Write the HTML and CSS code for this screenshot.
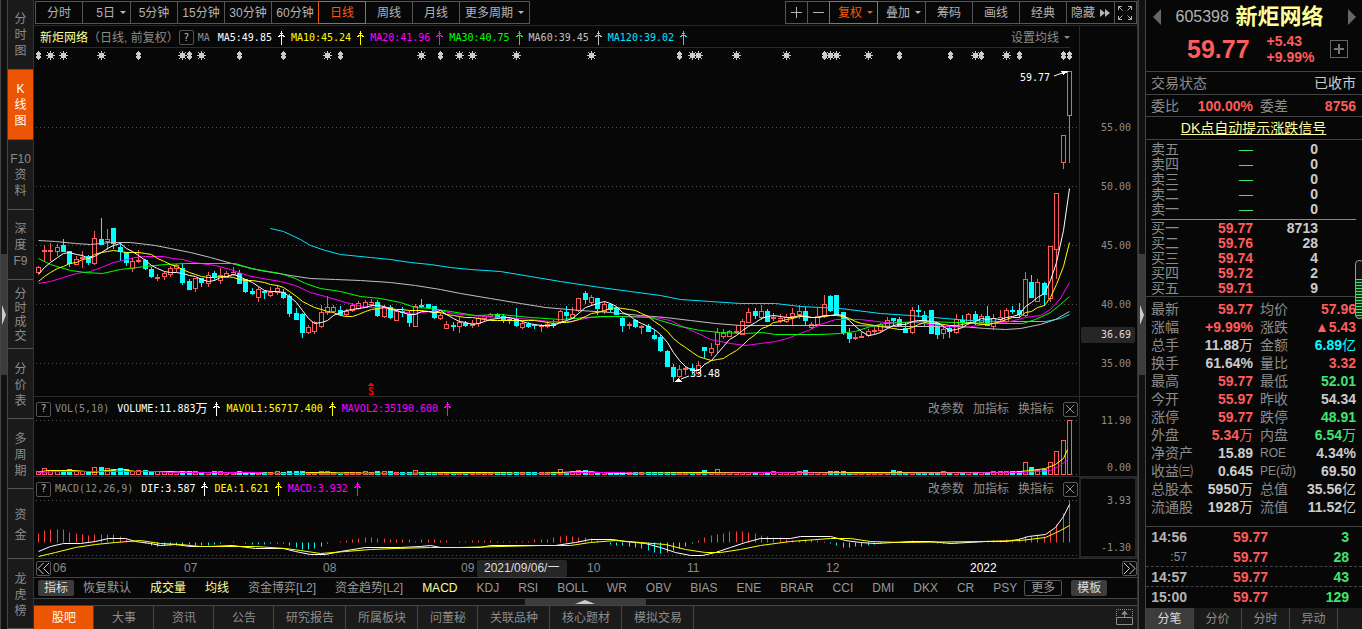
FILE: index.html
```html
<!DOCTYPE html>
<html lang="zh-CN">
<head>
  <meta charset="UTF-8">
  <meta name="viewport" content="width=device-width, initial-scale=1.0">
  <title>新炬网络 605398</title>
  <link rel="stylesheet" href="styles.css">
</head>
<body>
  <svg width="0" height="0" class="defs">
    <symbol id="up" viewBox="0 0 9 14"><path d="M4.500 0v14M3 2.500h3M2 4.500h5M1 5.500h2M6 5.500h2" fill="none" stroke="currentColor" shape-rendering="crispEdges"/></symbol>
    <symbol id="close" viewBox="0 0 14 14"><path d="M3 3l8 8M11 3l-8 8" fill="none" stroke="currentColor"/></symbol>
  </svg>

  <div class="app">
    <div class="gutter"><button class="handle" aria-label="收起左栏"><svg width="5" height="20" viewBox="0 0 5 20"><path d="M1 0l4 10-4 10z" fill="#ccc"/></svg></button></div>

    <nav class="side">
      <button>分<br>时<br>图</button>
      <button class="on">K<br>线<br>图</button>
      <button>F10<br>资<br>料</button>
      <button>深<br>度<br>F9</button>
      <button class="tight">分<br>时<br>成<br>交</button>
      <button>分<br>价<br>表</button>
      <button>多<br>周<br>期</button>
      <button class="loose">资<br>金</button>
      <button>龙<br>虎<br>榜</button>
    </nav>

    <main class="main">
      <div class="toolbar">
        <div class="group">
          <button>分时</button>
          <button class="menu">5日<i class="caret"></i></button>
          <button>5分钟</button>
          <button>15分钟</button>
          <button>30分钟</button>
          <button>60分钟</button>
          <button class="on">日线</button>
          <button>周线</button>
          <button>月线</button>
          <button class="wide">更多周期<i class="caret"></i></button>
        </div>
        <div class="group">
          <button class="icon" aria-label="放大"><svg width="13" height="13"><path d="M1 6.500h11M6.500 1v11" stroke="currentColor"/></svg></button>
          <button class="icon" aria-label="缩小"><svg width="13" height="13"><path d="M1 6.500h11" stroke="currentColor"/></svg></button>
          <button class="menu on">复权<i class="caret"></i></button>
          <button class="menu">叠加<i class="caret"></i></button>
          <button>筹码</button>
          <button>画线</button>
          <button>经典</button>
          <button class="menu">隐藏<svg width="10" height="8"><path d="M0 0l5 4-5 4zM5 0l5 4-5 4z" fill="currentColor"/></svg></button>
          <button class="icon" aria-label="全屏"><svg width="14" height="14"><path d="M.5 4V.5H4M.5.5l4 4M10 .5h3.500V4M13.500.5l-4 4M.5 10v3.500H4M.5 13.500l4-4M10 13.500h3.500V10M13.500 13.500l-4-4" fill="none" stroke="currentColor"/></svg></button>
        </div>
      </div>

      <!-- K线 -->
      <section class="panel price">
        <div class="plot">
          <div class="legend">
            <span class="name">新炬网络</span>
            <span class="sub">（日线, 前复权）</span>
            <button class="box">?</button>
            <span class="tag">MA</span>
            <span class="white">MA5:49.85<svg><use href="#up"/></svg></span>
            <span class="yellow">MA10:45.24<svg><use href="#up"/></svg></span>
            <span class="pink">MA20:41.96<svg><use href="#up"/></svg></span>
            <span class="green">MA30:40.75<svg><use href="#up"/></svg></span>
            <span class="silver">MA60:39.45<svg><use href="#up"/></svg></span>
            <span class="cyan">MA120:39.02<svg><use href="#up"/></svg></span>
            <button class="link right">设置均线<i class="caret"></i></button>
          </div>
          <svg class="chart" id="priceChart" viewBox="34 48 1045 348" preserveAspectRatio="none"></svg>
        </div>
        <div class="axis">
          <span>55.00</span><span>50.00</span><span>45.00</span><span>40.00</span><span>35.00</span>
          <b>36.69</b>
        </div>
      </section>

      <!-- 成交量 -->
      <section class="panel volume">
        <div class="plot">
          <div class="legend">
            <button class="box">?</button>
            <span class="tag">VOL(5,10)</span>
            <span class="white">VOLUME:11.883<em>万</em><svg><use href="#up"/></svg></span>
            <span class="yellow">MAVOL1:56717.400<svg><use href="#up"/></svg></span>
            <span class="pink">MAVOL2:35190.600<svg><use href="#up"/></svg></span>
            <span class="links"><button class="link">改参数</button><button class="link">加指标</button><button class="link">换指标</button><button class="box" aria-label="关闭"><svg width="14" height="14"><use href="#close"/></svg></button></span>
          </div>
          <svg class="chart" id="volChart" viewBox="34 419 1045 57" preserveAspectRatio="none"></svg>
        </div>
        <div class="axis ends"><span>11.90</span><span>0.00</span></div>
      </section>

      <!-- MACD -->
      <section class="panel macd">
        <div class="plot">
          <div class="legend">
            <button class="box">?</button>
            <span class="tag">MACD(12,26,9)</span>
            <span class="white">DIF:3.587<svg><use href="#up"/></svg></span>
            <span class="yellow">DEA:1.621<svg><use href="#up"/></svg></span>
            <span class="pink">MACD:3.932<svg><use href="#up"/></svg></span>
            <span class="links"><button class="link">改参数</button><button class="link">加指标</button><button class="link">换指标</button><button class="box" aria-label="关闭"><svg width="14" height="14"><use href="#close"/></svg></button></span>
          </div>
          <svg class="chart" id="macdChart" viewBox="34 499 1045 59" preserveAspectRatio="none"></svg>
        </div>
        <div class="axis ends framed"><span>3.93</span><span>-1.30</span></div>
      </section>

      <div class="dates">
        <button class="box" aria-label="向前"><svg width="13" height="13"><path d="M6.500 1L1 6.500 6.500 12M12 1L6.500 6.500 12 12" fill="none" stroke="#ccc"/></svg></button>
        <div class="months">
          <span>06</span><span>07</span><span>08</span><span>09</span><span>10</span><span>11</span><span>12</span><span class="year">2022</span>
          <b>2021/09/06/一</b>
        </div>
        <button class="box" aria-label="向后"><svg width="13" height="13"><path d="M1 1l5.500 5.500L1 12M6.500 1L12 6.500 6.500 12" fill="none" stroke="#ccc"/></svg></button>
      </div>

      <div class="indicators">
        <button class="fill">指标</button>
        <button>恢复默认</button>
        <button class="on">成交量</button>
        <button class="on">均线</button>
        <button>资金博弈[L2]</button>
        <button>资金趋势[L2]</button>
        <button class="on">MACD</button>
        <button>KDJ</button>
        <button>RSI</button>
        <button>BOLL</button>
        <button>WR</button>
        <button>OBV</button>
        <button>BIAS</button>
        <button>ENE</button>
        <button>BRAR</button>
        <button>CCI</button>
        <button>DMI</button>
        <button>DKX</button>
        <button>CR</button>
        <button>PSY</button>
        <button class="outline">更多</button>
        <button class="fill">模板</button>
      </div>

      <div class="strip"><button aria-label="展开"><svg width="20" height="4"><path d="M0 4l10-4 10 4z" fill="#ccc"/></svg></button></div>

      <div class="tabs">
        <button class="on">股吧</button>
        <button>大事</button>
        <button>资讯</button>
        <button>公告</button>
        <button>研究报告</button>
        <button>所属板块</button>
        <button>问董秘</button>
        <button>关联品种</button>
        <button>核心题材</button>
        <button>模拟交易</button>
        <button class="popup" aria-label="弹出"><svg width="17" height="17"><path d="M.5 8.500h16v7H.5z" fill="none" stroke="#8c8c8c"/><path d="M.5 7V.5h16V7" fill="none" stroke="#8c8c8c" stroke-dasharray="1 1"/><path d="M8.500 8V3" stroke="#8c8c8c"/><path d="M5 5.500l3.500-4 3.500 4z" fill="#8c8c8c"/></svg></button>
      </div>
    </main>

    <div class="gutter second"><button class="handle" aria-label="收起右栏"><svg width="5" height="20" viewBox="0 0 5 20"><path d="M1 0l4 10-4 10z" fill="#ccc"/></svg></button></div>

    <aside class="quote">
      <header>
        <div class="title">
          <button aria-label="上一个"><svg width="8" height="16"><path d="M8 0v16L0 8z" fill="#666"/></svg></button>
          <span class="code">605398</span>
          <h1>新炬网络</h1>
          <button aria-label="下一个"><svg width="8" height="16"><path d="M0 0v16l8-8z" fill="#666"/></svg></button>
        </div>
        <div class="now">
          <strong>59.77</strong>
          <span>+5.43<br>+9.99%</span>
          <button class="add" aria-label="加自选"><svg width="10" height="10"><path d="M0 5h10M5 0v10" stroke="#777" stroke-width="2"/></svg></button>
        </div>
      </header>
      <div class="line state"><span>交易状态</span><span class="val">已收市</span></div>
      <div class="line ratio"><span>委比</span><b class="red">100.00%</b><span>委差</span><b class="red">8756</b></div>
      <div class="line dk"><a href="#">DK点自动提示涨跌信号</a></div>

      <table class="book">
        <tbody id="asks"></tbody>
        <tbody id="bids"></tbody>
      </table>

      <dl class="stats" id="stats"></dl>

      <table class="ticks">
        <tr><th>14:56</th><td class="red">59.77</td><td class="lime">3</td></tr>
        <tr><th class="sec">:57</th><td class="red">59.77</td><td class="lime">28</td></tr>
        <tr><th>14:57</th><td class="red">59.77</td><td class="lime">43</td></tr>
        <tr><th>15:00</th><td class="red">59.77</td><td class="lime">129</td></tr>
      </table>
      <div class="quote-tabs">
        <button class="on">分笔</button><button>分价</button><button>分时</button><button>异动</button>
      </div>
      <i class="meter"></i>
    </aside>
  </div>

  <script src="chart.js"></script>
</body>
</html>
```

FILE: styles.css
```css
* {
  margin: 0;
  padding: 0;
  box-sizing: border-box;
}

body {
  background: #070707;
  color: #8c8c8c;
  font: 12px/16px "Liberation Sans", "Noto Sans CJK SC", sans-serif;
}

button {
  background: none;
  border: 0;
  color: inherit;
  font: inherit;
  white-space: nowrap;
  cursor: pointer;
}

svg {
  display: block;
  flex: none;
}

em, i {
  font-style: normal;
}

.defs {
  position: absolute;
}

.app {
  display: flex;
  height: 100vh;
  overflow: hidden;
}

/* gutters */
.gutter {
  flex: 0 0 8px;
  display: flex;
  flex-direction: column;
  padding: 254px 0;
  background: #111;
  border-left: 1px solid #444;
  border-right: 1px solid #444;
}

.gutter .handle {
  flex: 1;
  display: flex;
  align-items: center;
  background: #3c3c3c;
}

/* left navigation */
.side {
  flex: 0 0 26px;
  display: flex;
  flex-direction: column;
  background: #1a1a1a;
  border-right: 1px solid #333;
}

.side button {
  flex: 1 1 0;
  min-height: 0;
  border-bottom: 1px solid #555;
  padding-top: 2px;
}

.side .on {
  background: #eb5503;
  color: #fff;
}

.side .tight {
  line-height: 14px;
}

.side .loose {
  line-height: 20px;
}

.main {
  flex: 1;
  min-width: 0;
  display: flex;
  flex-direction: column;
  border-right: 1px solid #333;
}

/* top toolbar */
.toolbar {
  display: flex;
  justify-content: space-between;
  height: 26px;
  padding: 1px 0 1px 1px;
  border-bottom: 1px solid #262626;
}

.group {
  display: flex;
  height: 23px;
  padding-left: 1px;
}

.group button {
  width: 48px;
  margin-left: -1px;
  border: 1px solid #555;
  color: #b4b4b4;
  display: flex;
  align-items: center;
  justify-content: center;
}

.group .menu {
  width: 49px;
  gap: 5px;
  justify-content: flex-end;
  padding-right: 4px;
}

.group .wide {
  width: 71px;
  gap: 5px;
}

.group .icon {
  width: 23px;
}

.group .on {
  position: relative;
  color: #ff5a00;
  border-color: #eb5503;
}

.caret {
  border: 3px solid transparent;
  border-top-color: currentColor;
  border-bottom: 0;
}

/* chart panels */
.panel {
  display: flex;
  border-bottom: 1px solid #2a2a2a;
}

.price {
  flex: 1;
  min-height: 0;
}

.volume {
  height: 80px;
}

.macd {
  height: 82px;
}

.plot {
  flex: 1;
  min-width: 0;
  display: flex;
  flex-direction: column;
}

.legend {
  display: flex;
  align-items: center;
  height: 22px;
  padding: 2px 0 0 2px;
  font-family: "DejaVu Sans Mono", monospace;
  font-size: 10px;
}

.price .legend {
  margin: 0 9px 0 6px;
  padding: 2px 0 0;
  border-bottom: 1px solid #2a2a2a;
}

.legend > span {
  display: flex;
  align-items: center;
  margin-right: 5px;
  white-space: nowrap;
}

.legend > span > svg {
  width: 9px;
  height: 14px;
  margin-left: 5px;
}

.legend em, .legend .name, .legend .sub, .link {
  font: 12px/16px "Liberation Sans", "Noto Sans CJK SC", sans-serif;
}

.legend .name {
  color: #ffff99;
}

.legend .name, .legend .sub {
  margin-right: 0;
}

.legend .box {
  margin-right: 4px;
}

.legend .tag {
  margin-right: 8px;
}

.box {
  flex: none;
  display: flex;
  align-items: center;
  justify-content: center;
  width: 15px;
  height: 15px;
  border: 1px solid #555;
  border-radius: 2px;
  color: #bbb;
}

.link {
  display: flex;
  align-items: center;
  gap: 5px;
}

.legend .right {
  margin-left: auto;
}

.legend .links {
  display: flex;
  gap: 9px;
  margin: 0 1px 0 auto;
}

.links .box {
  margin-right: 0;
  color: #8c8c8c;
}

.chart {
  width: 100%;
  flex: 1 1 0;
  min-height: 0;
  shape-rendering: crispEdges;
}

.chart text {
  font: 10px "DejaVu Sans Mono", monospace;
  fill: #fff;
}

.chart .sell {
  font-weight: bold;
  fill: #f00;
}

.chart path, .chart polyline {
  fill: none;
}

.grid {
  stroke: #555;
  stroke-dasharray: 1 3;
}

.axis {
  position: relative;
  flex: 0 0 58px;
  display: flex;
  flex-direction: column;
  padding: 72px 6px 3px 0;
  border-left: 1px solid #2a2a2a;
  font: 10px/16px "DejaVu Sans Mono", monospace;
  text-align: right;
}

.axis span {
  flex: 1;
  display: flex;
  align-items: center;
  justify-content: flex-end;
}

.axis b {
  position: absolute;
  left: 1px;
  right: 2px;
  top: 301px;
  padding-right: 4px;
  background: #262626;
  border-radius: 2px;
  color: #ddd;
  font-weight: normal;
}

.axis.ends {
  justify-content: space-between;
  padding: 16px 6px 0 0;
}

.axis.ends span {
  flex: none;
}

.axis.framed {
  border: 2px solid #262626;
  padding: 14px 4px 0 0;
}

/* date axis */
.dates {
  display: flex;
  align-items: center;
  height: 19px;
  padding: 0 0 0 2px;
  border-bottom: 1px solid #444;
}

.months {
  position: relative;
  flex: 1;
  display: grid;
  grid-template-columns: 131fr 139fr 138fr 126fr 100fr 139fr 144fr 154fr;
  line-height: 18px;
}

.months span {
  padding-left: 2px;
}

.months .year {
  color: #fff;
}

.months b {
  position: absolute;
  left: 426px;
  top: 1px;
  padding: 0 8px 0 7px;
  background: #262626;
  border-radius: 2px;
  color: #ddd;
  font-weight: normal;
  line-height: 17px;
}

/* indicator row */
.indicators {
  display: flex;
  align-items: center;
  gap: 19px;
  height: 21px;
  padding-left: 4px;
  border-bottom: 1px solid #444;
  color: #999;
}

.indicators .on {
  color: #ffff99;
}

.indicators .fill, .indicators .outline {
  height: 16px;
  padding: 0 6px;
  margin: 0 -10px 0 0;
  border-radius: 2px;
  line-height: 14px;
}

.indicators .fill {
  background: #3c3c3c;
  color: #ddd;
}

.indicators .outline {
  margin-left: -12px;
  border: 1px solid #555;
}

.strip {
  display: flex;
  justify-content: center;
  height: 7px;
  background: #111;
  border-bottom: 1px solid #444;
}

.strip button {
  width: 121px;
  display: flex;
  align-items: center;
  justify-content: center;
  background: #3c3c3c;
}

/* bottom tabs */
.tabs {
  display: flex;
  height: 23px;
  background: #1a1a1a;
}

.tabs button {
  min-width: 60px;
  padding: 0 11px 0 12px;
  border-right: 1px solid #444;
}

.tabs .on {
  background: #eb5503;
  color: #fff;
}

.tabs .popup {
  min-width: 0;
  margin-left: auto;
  padding: 0 4px;
  border: 0;
}

/* quote panel */
.quote {
  position: relative;
  flex: 0 0 216px;
  font-size: 14px;
}

.quote header {
  height: 71px;
  padding-top: 4px;
}

.title {
  display: flex;
  align-items: center;
  justify-content: space-between;
  padding: 0 6px 0 7px;
  height: 26px;
}

.code {
  margin-left: 8px;
  font-size: 16px;
  color: #b4b4b4;
}

.title h1 {
  margin-right: 18px;
  font-size: 22px;
  line-height: 26px;
  color: #ffff99;
}

.now {
  display: flex;
  align-items: center;
  padding: 3px 14px 0 41px;
  color: #ff5c5c;
  font-weight: bold;
}

.now strong {
  margin-right: 17px;
  font-size: 25px;
}

.now .add {
  display: flex;
  align-items: center;
  justify-content: center;
  width: 18px;
  height: 18px;
  margin-left: auto;
  border: 1px solid #666;
}

.line {
  display: flex;
  align-items: center;
  justify-content: space-between;
  height: 23px;
  padding: 0 6px 0 5px;
  border-top: 1px solid #444;
}

.line .val {
  color: #ccc;
}

.ratio, .stats {
  display: grid;
  grid-template-columns: 36px 66px 1fr 60px;
}

.ratio {
  height: 22px;
}

.ratio b, .stats dd {
  text-align: right;
}

.ratio span:nth-of-type(2), .stats dt:nth-of-type(even) {
  padding-left: 7px;
}

.line.dk {
  justify-content: center;
}

.dk a {
  color: #ffff99;
}

.red { color: #ff5c5c; }
.lime { color: #3ee66e; }
.aqua { color: #00ffff; }
.white { color: #fff; }
.yellow { color: #ffff00; }
.pink { color: #ff00ff; }
.green { color: #00ff00; }
.silver { color: #c0c0c0; }
.cyan { color: #00e5ff; }

.book {
  width: 100%;
  border-collapse: collapse;
  border-top: 1px solid #444;
}

.book tbody {
  display: block;
  padding: 2px 0;
}

.book tbody + tbody {
  margin: 0 6px 0 5px;
  border-top: 1px solid #888;
  padding: 1px 0 0;
}

.book tr {
  display: flex;
  height: 15px;
  line-height: 15px;
  padding-left: 5px;
}

.book tbody + tbody tr {
  padding-left: 0;
}

.book th {
  width: 42px;
  text-align: left;
  font-weight: normal;
}

.book td {
  width: 60px;
  text-align: right;
  font-weight: bold;
}

.book td.lime {
  font-weight: normal;
}

.book td:last-child {
  width: 65px;
  color: #ccc;
}

.stats {
  padding: 3px 6px 10px 5px;
  border-top: 1px solid #444;
  line-height: 18px;
}

.stats dt {
  white-space: nowrap;
}

.stats dt.latin {
  font-size: 12px;
}

.stats dd {
  font-weight: bold;
  white-space: nowrap;
}

.stats dd:not([class]) {
  color: #ccc;
}

.stats dd em {
  font-weight: normal;
}

.ticks {
  width: 100%;
  border-collapse: collapse;
  border-top: 1px solid #444;
}

.ticks tr {
  display: flex;
  height: 20px;
  line-height: 20px;
}

.ticks tr:nth-child(n+2):nth-child(-n+3) {
  border-bottom: 1px dashed #444;
}

.ticks th {
  width: 41px;
  text-align: right;
  color: #b4b4b4;
}

.ticks .sec {
  font-size: 12px;
  font-weight: normal;
  color: #8c8c8c;
}

.ticks td {
  width: 81px;
  text-align: right;
  font-weight: bold;
}

.quote-tabs {
  display: flex;
  height: 22px;
  margin-top: 1px;
  background: #1a1a1a;
  border-bottom: 1px solid #444;
  font-size: 12px;
}

.quote-tabs button {
  width: 48px;
  border-right: 1px solid #444;
}

.quote-tabs .on {
  background: #3c3c3c;
  color: #ddd;
}

.meter {
  position: absolute;
  top: 260px;
  right: -2px;
  width: 9px;
  height: 59px;
  border: 1px solid #999;
  border-radius: 4px;
  background: repeating-linear-gradient(#3ee66e 0 1px, #0a3318 1px 3px) 0 18px no-repeat #111;
}
```

FILE: chart.js
```javascript
// One entry per day: colour, wick top, body top, body bottom, wick bottom
const candles = `r266,267,272,273 r245,250,251,261 r243,250,251,260 r244,247,251,255 c239,245,251,251 c251,251,263,266 r256,259,264,264 r251,257,258,267
c255,256,262,264 r231,238,263,264 c218,239,244,244 r229,239,241,249 c228,228,243,248 c243,247,251,260 c252,252,262,265 r258,261,268,271
r250,260,261,262 c259,260,268,269 c267,269,276,277 r274,277,278,280 r272,273,276,279 r266,268,274,276 r264,265,268,271 c264,268,282,284
c279,281,289,289 r278,278,288,291 c278,278,282,286 r272,275,283,286 c271,273,277,280 r268,275,280,283 r271,273,277,277 r267,272,274,275
c270,273,283,283 c279,279,291,292 c288,291,293,294 r287,289,297,301 c290,291,292,298 r287,292,295,296 r285,288,292,294 c289,292,297,298
c294,296,313,316 c308,313,319,319 c313,314,332,337 r325,327,332,333 r321,322,331,333 r305,312,326,327 r296,307,312,314 r305,307,311,312
c306,310,314,315 r309,311,314,316 r303,305,310,311 r301,303,308,309 r300,302,307,307 r299,302,304,306 c300,302,315,316 r305,307,316,317
c305,307,317,318 r311,311,320,320 c307,311,312,316 c311,314,322,326 r304,306,326,326 c299,305,306,307 c304,304,307,307 c306,306,317,318
r312,315,318,319 r321,324,328,328 c322,325,326,330 r317,322,326,332 c321,323,325,326 r320,323,325,327 r317,318,323,326 r315,316,318,320
r313,314,316,317 c313,314,317,318 c314,316,319,322 c317,319,320,323 c308,319,325,326 r321,323,327,328 c322,324,326,327 c324,325,325,328
r324,325,325,331 r321,324,326,327 c320,324,325,327 r310,311,321,323 c306,312,315,319 r307,314,317,318 r298,298,310,311 c291,293,299,303
r295,297,302,305 c298,298,308,314 r302,304,311,313 c303,304,309,311 c307,308,314,314 c317,318,325,331 r322,324,325,328 c319,320,326,327
r325,326,327,333 c324,326,331,331 c330,335,338,339 c335,337,350,351 c350,351,366,366 c364,367,376,381 r365,369,376,377 r366,368,369,374
c364,368,370,374 r361,365,373,374 c347,347,350,357 r343,348,352,355 r328,332,344,352 r329,333,336,338 r330,331,336,336 r325,331,332,333
r319,321,334,334 r308,312,322,322 c308,311,315,318 r305,311,317,319 c309,311,321,321 r313,317,318,320 r314,318,320,322 r314,317,321,322
r308,313,316,325 r305,311,314,318 c307,311,320,325 r322,324,327,328 r308,316,324,325 r295,304,316,317 c295,296,310,311 c295,295,314,314
c312,312,332,334 c328,333,338,342 r333,337,338,339 r332,336,336,337 r329,331,335,336 r327,330,331,333 r323,324,330,332 r317,320,326,327
c318,318,320,325 c317,319,325,326 c323,328,332,332 r307,310,332,333 c305,310,311,316 c311,315,321,325 c310,310,333,333 c322,323,334,338
r324,329,333,338 c325,328,331,337 r314,319,332,333 c315,320,322,325 r313,314,323,324 c311,314,319,324 r314,316,322,323 c306,316,325,325
r314,318,326,329 r310,317,319,323 r308,310,321,322 c306,310,311,313 c303,310,314,317 r272,279,315,316 c275,282,297,297 r279,282,301,301
c282,283,294,305 r246,246,298,301 r193,193,249,278 r135,135,162,168 r71,71,115,162`.split(/\s+/).map(s => {
  const v = s.slice(1).split(',').map(Number);
  return { up: s[0] === 'r', v: v };
});

const volumes = [3,6,4,4,3,5,3,3,2,7,7,6,5,6,5,3,4,4,3,3,3,3,2,3,3,3,2,2,3,3,2,2,3,2,2,2,2,2,3,2,3,3,3,2,2,3,3,2,1,2,2,2,3,2,3,3,3,2,2,2,4,2,2,2];
const lastVolumes = { 83: 5, 85: 3, 86: 4, 87: 4, 88: 3, 106: 4, 108: 5, 117: 3, 121: 3, 122: 4, 126: 3, 127: 3, 128: 3, 136: 4, 137: 3, 144: 3, 152: 3, 153: 3, 154: 3, 155: 3, 156: 3, 157: 12, 158: 7, 159: 4, 160: 5, 161: 12, 162: 23, 163: 34, 164: 54 };

const macd = [9,12,13,13,13,10,9,8,7,8,8,8,8,6,3,1,0,-1,-3,-4,-3,-3,-3,-3,-2,-3,-3,-3,-2,-1,0,1,0,-1,-2,-2,-2,-1,-1,-1,
  -3,-5,-7,-7,-6,-4,-1,0,1,2,3,4,5,5,4,4,3,3,3,3,1,3,3,3,2,2,1,0,0,-1,0,1,1,2,2,2,2,1,1,1,
  1,1,1,3,3,3,5,6,7,6,5,5,4,2,0,-2,-3,-3,-4,-5,-6,-8,-10,-11,-10,-8,-6,-4,-1,2,5,7,8,9,11,11,11,10,9,7,
  6,5,5,3,2,2,3,3,2,1,-1,-3,-5,-5,-4,-4,-3,-2,-1,0,0,0,1,2,1,1,0,-1,-1,-1,-1,0,1,1,1,1,2,2,3,3,4,6,6,7,6,11,18,29,42];

const lines = {
  ma20: '38,283 50,281 63,277 76,273 90,271 101,267 113,262 122,260 134,257 145,256 163,256 172,258 182,259 193,262 215,265 230,269 247,275 262,278 280,281 295,285 310,292 325,296 345,302 362,306 390,308 400,311 412,313 430,311 440,310 452,313 470,315 500,317 520,318 550,321 570,321 590,317 610,316 640,316 655,317 670,320 680,325 700,334 710,339 730,343 745,345 760,343 775,341 787,338 797,334 808,330 820,324 835,319 860,319 885,322 915,322 945,326 965,327 990,323 1010,321 1025,317 1040,315 1050,309 1060,298 1069,282',
  ma30: '38,258 50,264 70,270 85,272 102,273 120,269 145,266 165,264 185,263 235,263 250,268 280,273 295,278 305,283 320,288 340,291 360,296 380,298 400,302 415,307 430,308 450,311 475,315 500,314 530,317 560,319 600,316 620,316 650,317 660,320 680,326 700,330 720,332 745,333 762,332 775,334 820,334 840,333 855,331 870,326 885,323 900,322 925,321 955,322 1000,323 1022,323 1035,319 1050,312 1060,304 1069,296',
  ma60: '38,240 55,241 75,243 90,244 110,242 130,242 155,245 170,248 190,252 210,257 235,264 260,270 290,275 310,278 335,279 360,280 390,282 415,285 440,289 460,293 490,298 520,303 545,307 580,310 610,312 640,315 665,317 690,320 715,323 740,325 765,325 850,325 900,326 960,326 985,328 1005,329 1020,328 1040,324 1055,319 1069,311',
  ma120: '270,228 283,231 300,239 310,245 325,250 340,254 370,257 390,259 410,262 430,264 450,267 470,269 500,271 530,276 560,281 600,287 630,291 660,295 680,299 710,301 740,303 775,303 800,306 840,308 880,313 910,315 945,318 970,320 1000,321 1045,321 1060,318 1069,314',
  vol5: '38,472 46,470 60,470 75,470 95,472 105,470 122,469 135,471 165,471 200,472 300,473 310,472 400,473 450,472 475,472 540,473 580,471 620,473 700,472 760,472 840,472 920,472 1010,472 1020,471 1030,470 1045,468 1055,464 1063,458 1067,449',
  vol10: '38,472 60,471 155,471 170,472 260,472 265,473 560,473 575,472 620,472 640,473 700,473 770,472 860,473 1020,472 1050,470 1060,465 1067,459',
  dif: '38,551 50,546 63,543 80,543 95,541 108,538 125,538 135,541 150,543 160,545 175,544 190,546 210,546 232,545 255,548 283,548 295,551 310,554 325,554 340,551 365,547 400,547 420,546 430,545 440,547 480,547 490,545 555,545 575,542 590,539 612,539 625,541 645,543 660,547 675,552 690,555 702,555 715,552 730,547 745,542 760,538 790,538 800,536 830,536 845,540 860,542 875,543 910,541 930,541 950,543 985,541 1005,541 1018,539 1028,536 1045,534 1055,527 1063,516 1069,504',
  dea: '38,556 55,552 75,547 95,544 115,542 140,540 160,543 180,544 200,546 255,546 285,548 300,550 320,553 345,551 370,549 395,548 430,547 460,547 540,545 570,545 590,542 615,540 640,542 665,544 685,549 705,552 720,552 740,549 760,545 790,541 830,538 850,538 870,541 900,542 980,541 1020,540 1045,537 1060,530 1069,525'
};

const RED = '#ff5c5c';
const CYAN = '#00ffff';

function xAt(i) {
  return Math.floor(38.3 + i * 6.287);
}

function grid(ys) {
  return ys.map(y => `<path class="grid" d="M36 ${y + 0.5}H1079"/>`).join('');
}

function line(points, color) {
  return `<polyline points="${points}" stroke="${color}" transform="translate(.5 .5)"/>`;
}

function bar(x, top, bottom, up) {
  if (!up) return `<rect x="${x - 2}" y="${top}" width="5" height="${bottom - top + 1}" fill="${CYAN}"/>`;
  return `<rect x="${x - 1.5}" y="${top + 0.5}" width="4" height="${Math.max(bottom - top, 1)}" fill="#070707" stroke="${RED}"/>`;
}

// Moving average of the closes, with the first days given
function average(n, lead) {
  const pts = lead.map((y, i) => xAt(i) + ',' + y);
  for (let i = lead.length; i < candles.length; i++) {
    let sum = 0;
    for (let k = i - n + 1; k <= i; k++) {
      sum += candles[k].up ? candles[k].v[1] : candles[k].v[2];
    }
    pts.push(xAt(i) + ',' + Math.round(sum / n));
  }
  return pts.join(' ');
}

function drawPrice() {
  let out = grid([127, 186, 245, 304, 363]);
  candles.forEach((c, i) => {
    const x = xAt(i);
    out += `<path d="M${x + 0.5} ${c.v[0]}V${c.v[3] + 1}" stroke="${c.up ? RED : CYAN}"/>`;
    out += bar(x, c.v[1], c.v[2], c.up);
  });
  out += line(lines.ma120, '#00e5ff') + line(lines.ma60, '#c0c0c0') + line(lines.ma20, '#ff00ff') + line(lines.ma30, '#00ff00');
  out += line(average(10, [281, 276, 272, 268, 266, 263, 262, 259, 258]), '#ffff00');
  out += line(average(5, [274, 267, 262, 257]), '#ffffff');

  // Event marks
  [50, 63, 101, 182, 201, 327, 421, 459, 472, 516, 591, 692, 698, 736, 786, 830, 836, 868, 975, 1006].forEach(x => {
    out += `<g transform="translate(${x - 4} 51)" fill="#ccc"><rect x="2" y="2" width="5" height="5"/><path d="M4.500 0v9M0 4.500h9" stroke="#ccc"/><path d="M1 1h1v1h-1zM7 1h1v1h-1zM1 7h1v1h-1zM7 7h1v1h-1z" style="fill:#ccc"/></g>`;
  });
  [38, 138, 189, 239, 283, 340, 440, 679, 824, 899, 950, 981, 1019, 1063, 1069].forEach(x => {
    out += `<g transform="translate(${x - 2} 51)" fill="#ccc"><rect x="2" y="0" width="1" height="9"/><rect x="1" y="1" width="3" height="7"/><rect y="2" width="5" height="2"/><rect y="5" width="5" height="2"/></g>`;
  });

  out += '<text x="1020" y="81">59.77</text><path d="M1054 76L1062 73" stroke="#fff"/><polygon points="1061,71 1069,71 1063,75" fill="#fff"/>';
  out += '<text x="690" y="377">33.48</text><path d="M689 376L681 379" stroke="#fff"/><polygon points="675,382 679,378 683,382" fill="#fff"/>';
  out += '<polygon points="368,386 371,382 374,386" fill="#f00"/><text class="sell" x="368" y="395">S</text>';
  document.getElementById('priceChart').innerHTML = out;
}

function drawVolume() {
  let out = grid([420, 474]);
  candles.forEach((c, i) => {
    const h = lastVolumes[i] || volumes[i] || 2;
    out += bar(xAt(i), 474 - h, 474, c.up);
  });
  out += line(lines.vol5, '#ffff00') + line(lines.vol10, '#ff00ff');
  document.getElementById('volChart').innerHTML = out;
}

function drawMacd() {
  let out = grid([500, 555]);
  // The histogram is aligned to the most recent day
  candles.forEach((c, i) => {
    const h = i < 66 ? macd[i] : macd[i + macd.length - candles.length];
    if (h) out += `<path d="M${xAt(i) + 0.5} 542.500v${-h}" stroke="${h > 0 ? '#ff4040' : CYAN}"/>`;
  });
  out += line(lines.dif, '#ffffff') + line(lines.dea, '#ffff00');
  document.getElementById('macdChart').innerHTML = out;
}

function row(label, price, count) {
  return `<tr><th>${label}</th><td class="${price === '—' ? 'lime' : 'red'}">${price}</td><td>${count}</td></tr>`;
}

function drawQuote() {
  document.getElementById('asks').innerHTML = ['五', '四', '三', '二', '一'].map(n => row('卖' + n, '—', 0)).join('');
  document.getElementById('bids').innerHTML = [['一', '59.77', 8713], ['二', '59.76', 28], ['三', '59.74', 4], ['四', '59.72', 2], ['五', '59.71', 9]]
    .map(b => row('买' + b[0], b[1], b[2])).join('');

  const stats = [
    ['最新', '59.77', 'red'], ['均价', '57.96', 'red'],
    ['涨幅', '+9.99%', 'red'], ['涨跌', '▲5.43', 'red'],
    ['总手', '11.88万'], ['金额', '6.89亿', 'aqua'],
    ['换手', '61.64%'], ['量比', '3.32', 'red'],
    ['最高', '59.77', 'red'], ['最低', '52.01', 'lime'],
    ['今开', '55.97', 'red'], ['昨收', '54.34'],
    ['涨停', '59.77', 'red'], ['跌停', '48.91', 'lime'],
    ['外盘', '5.34万', 'red'], ['内盘', '6.54万', 'lime'],
    ['净资产', '15.89'], ['ROE', '4.34%'],
    ['收益㈢', '0.645'], ['PE(动)', '69.50'],
    ['总股本', '5950万'], ['总值', '35.56亿'],
    ['流通股', '1928万'], ['流值', '11.52亿']
  ];
  document.getElementById('stats').innerHTML = stats.map(s => {
    const latin = /^[A-Z]/.test(s[0]) ? ' class="latin"' : '';
    const color = s[2] ? ` class="${s[2]}"` : '';
    return `<dt${latin}>${s[0]}</dt><dd${color}>${s[1].replace(/([万亿])/, '<em>$1</em>')}</dd>`;
  }).join('');
}

drawPrice();
drawVolume();
drawMacd();
drawQuote();
```
